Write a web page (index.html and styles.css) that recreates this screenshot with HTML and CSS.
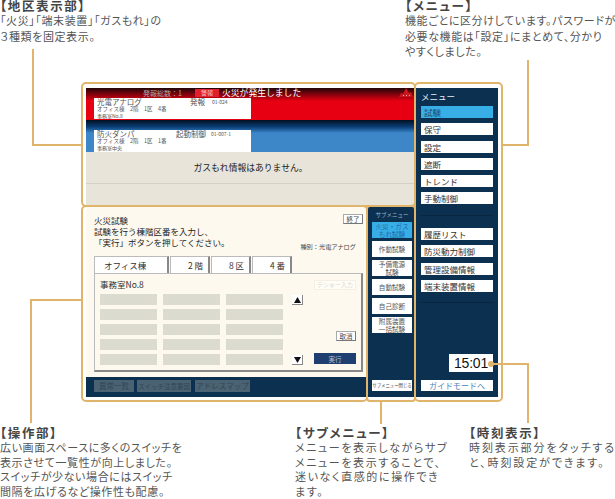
FILE: index.html
```html
<!DOCTYPE html>
<html lang="ja">
<head>
<meta charset="utf-8">
<title>操作画面</title>
<link rel="stylesheet" href="styles.css">
</head>
<body>
<div class="page">

  <div class="screen">

    <div class="area">
      <div class="alarm alarm-fire">
        <div class="alarm-head">
          <span class="count">発報総数：1</span>
          <span class="badge">警報</span>
          <span class="alarm-title">火災が発生しました</span>
          <svg class="fire-icon" width="14" height="9" viewBox="0 0 14 9"><path d="M0 9 L2 5 L4 6 L7 0 L10 5 L12 4 L14 9 Z" fill="#c9151d"/><path d="M4 7h1v1H4zM7 7h1v1H7zM10 7h1v1h-1z" fill="#f3b0b0"/></svg>
        </div>
        <div class="card card-red">
          <div class="card-top"><span class="card-name">光電アナログ</span><span class="card-state state-a">発報</span><span class="card-code">01-024</span></div>
          <div class="card-place">オフィス棟　2階　1区　4番</div>
          <div class="card-room">事務室No.8</div>
        </div>
      </div>
      <div class="alarm alarm-equip">
        <div class="card">
          <div class="card-top"><span class="card-name">防火ダンパ</span><span class="card-state state-b">起動制御</span><span class="card-code">01-007-1</span></div>
          <div class="card-place">オフィス棟　2階　1区　1番</div>
          <div class="card-room">事務室中央</div>
        </div>
      </div>
      <div class="gas">
        <div class="gas-msg">ガスもれ情報はありません。</div>
        <div class="gas-empty"></div>
      </div>
    </div>

    <div class="work">
      <div class="work-body">
        <div class="guide">
          <div class="guide-text">火災試験<br>試験を行う棟階区番を入力し、<br>「実行」ボタンを押してください。</div>
          <div class="guide-side">
            <span class="btn btn-end">終了</span>
            <span class="kind">種別：光電アナログ</span>
          </div>
        </div>
        <div class="tabs">
          <span class="tab tab-b">オフィス棟</span>
          <span class="tab tab-f">2 階</span>
          <span class="tab tab-f">8 区</span>
          <span class="tab tab-f">4 番</span>
        </div>
        <div class="panel">
          <div class="panel-left">
            <div class="room">事務室No.8</div>
            <div class="slots">
              <i></i><i></i><i></i><i></i><i></i>
              <i></i><i></i><i></i><i></i><i></i>
              <i></i><i></i><i></i><i></i><i></i>
            </div>
          </div>
          <div class="arrows">
            <span class="arrow"><svg width="7" height="6" viewBox="0 0 7 6"><path d="M3.5 0L7 6H0Z" fill="#111"/></svg></span>
            <span class="arrow"><svg width="7" height="6" viewBox="0 0 7 6"><path d="M0 0H7L3.5 6Z" fill="#111"/></svg></span>
          </div>
          <div class="panel-right">
            <span class="tenkey">テンキー入力</span>
            <span class="btn btn-cancel">取消</span>
            <span class="btn btn-run">実行</span>
          </div>
        </div>
      </div>
      <div class="work-foot">
        <span class="off off-1">異常一覧</span>
        <span class="off off-2">スイッチ注意要因</span>
        <span class="off off-3">アドレスマップ</span>
      </div>
    </div>

    <div class="sub">
      <div class="sub-title">サブメニュー</div>
      <div class="sub-item sub-active">火災・ガス<br>もれ試験</div>
      <div class="sub-item">作動試験</div>
      <div class="sub-item">予備電源<br>試験</div>
      <div class="sub-item">自動試験</div>
      <div class="sub-item">自己診断</div>
      <div class="sub-item">附属装置<br>一括試験</div>
      <div class="sub-close">サブメニュー閉じる</div>
    </div>

    <div class="menu">
      <div class="menu-title">メニュー</div>
      <div class="menu-group">
        <div class="menu-item menu-active">試験</div>
        <div class="menu-item">保守</div>
        <div class="menu-item">設定</div>
        <div class="menu-item">遮断</div>
        <div class="menu-item">トレンド</div>
        <div class="menu-item">手動制御</div>
      </div>
      <div class="menu-group menu-group-2">
        <div class="menu-item">履歴リスト</div>
        <div class="menu-item">防災動力制御</div>
        <div class="menu-item">管理設備情報</div>
        <div class="menu-item">端末装置情報</div>
      </div>
      <div class="clock">15:01</div>
      <div class="guide-btn">ガイドモードへ</div>
    </div>

  </div>

  <svg class="lines" width="615" height="499" viewBox="0 0 615 499">
    <g fill="none" stroke="#e0b46a" stroke-width="2">
      <rect x="82" y="83" width="333" height="123" rx="4"/>
      <rect x="82" y="206" width="285" height="195" rx="4"/>
      <rect x="367" y="206" width="48" height="195" rx="3"/>
      <rect x="415" y="83" width="87" height="318" rx="4"/>
      <path d="M33 49V145H82M31 423V300H82M528 60V145H502M381 402V424M528 423V364H491"/>
    </g>
    <circle cx="491" cy="364" r="3" fill="#e0b46a"/>
  </svg>

  <div class="note note-area">
    <h2>【地区表示部】</h2>
    <p>「火災」「端末装置」「ガスもれ」の<br>３種類を固定表示。</p>
  </div>
  <div class="note note-menu">
    <h2>【メニュー】</h2>
    <p>機能ごとに区分けしています。パスワードが<br>必要な機能は「設定」にまとめて、分かり<br>やすくしました。</p>
  </div>
  <div class="note note-work">
    <h2>【操作部】</h2>
    <p>広い画面スペースに多くのスイッチを<br>表示させて一覧性が向上しました。<br>スイッチが少ない場合にはスイッチ<br>間隔を広げるなど操作性も配慮。</p>
  </div>
  <div class="note note-sub">
    <h2>【サブメニュー】</h2>
    <p>メニューを表示しながらサブ<br>メニューを表示することで、<br>迷いなく直感的に操作でき<br>ます。</p>
  </div>
  <div class="note note-time">
    <h2>【時刻表示】</h2>
    <p>時刻表示部分をタッチする<br>と、時刻設定ができます。</p>
  </div>

</div>
</body>
</html>
```

FILE: styles.css
```css
* {
    box-sizing: border-box;
}

body {
    margin: 0;
    background-color: white;
    font-family: "Noto Sans CJK JP", "Noto Sans", sans-serif;
    color: #222;
}

.page {
    position: relative;
    width: 615px;
    height: 499px;
    padding: 88px 0 0 86px;
    overflow: hidden;
}

.screen {
    display: grid;
    grid-template-columns: 281px 48px 83px;
    grid-template-rows: 118px 191px;
    width: 412px;
    height: 309px;
}

/* top area */
.area {
    grid-column: 1 / 3;
    grid-row: 1;
    display: flex;
    flex-direction: column;
}

.alarm {
    height: 32px;
    padding-left: 8px;
    display: flex;
    flex-direction: column;
    justify-content: flex-end;
    position: relative;
}

.alarm-fire {
    background: linear-gradient(#200508, #e60012 13px);
}

.alarm-equip {
    background: linear-gradient(#02101f, #0a3f78 7px, #3d86c8 13px);
}

.alarm-head {
    position: absolute;
    top: 0;
    left: 57px;
    right: 0;
    height: 10px;
    display: flex;
    align-items: center;
    line-height: 10px;
}

.count {
    width: 52px;
    font-size: 7px;
    color: #b0a8a8;
}

.badge {
    width: 24px;
    height: 8px;
    line-height: 8px;
    background-color: #e0202c;
    color: #f2c8c8;
    font-size: 6px;
    text-align: center;
}

.alarm-title {
    margin-left: 3px;
    font-size: 8.8px;
    color: white;
}

.fire-icon {
    position: absolute;
    top: 0;
    right: 2px;
}

.card {
    width: 157px;
    height: 22px;
    background-color: white;
    padding-left: 3px;
    color: #555;
}

.card-red {
    height: 21px;
    margin-bottom: 1px;
}

.card-top {
    display: flex;
    align-items: center;
    height: 8px;
    font-size: 7.5px;
    line-height: 8px;
}

.card-name {
    width: 79px;
}

.state-a {
    width: 22px;
    margin-left: 14px;
}

.state-b {
    width: 35px;
}

.card-code {
    font-size: 5px;
}

.card-place {
    height: 7px;
    font-size: 5.5px;
    line-height: 7px;
}

.card-room {
    height: 6px;
    font-size: 5px;
    line-height: 6px;
}

.gas {
    flex: 1;
    background-color: #e8e4da;
}

.gas-msg {
    height: 32px;
    border-bottom: 1px solid #d4d0c6;
    text-align: center;
    font-size: 8.8px;
    line-height: 32px;
}

/* work area */
.work {
    grid-column: 1;
    grid-row: 2;
    display: flex;
    flex-direction: column;
}

.work-body {
    height: 171px;
    background-color: #fdf9ee;
    padding: 8px 4px 0 8px;
}

.guide {
    display: flex;
    justify-content: space-between;
    height: 42px;
}

.guide-text {
    font-size: 8.5px;
    line-height: 11px;
    padding-top: 1px;
}

.guide-side {
    display: flex;
    flex-direction: column;
    align-items: flex-end;
    justify-content: space-between;
    padding-bottom: 5px;
}

.kind {
    font-size: 6.2px;
    line-height: 8px;
    color: #444;
    margin-right: 7px;
}

.btn {
    display: block;
    text-align: center;
    font-size: 6.5px;
    background-color: white;
    border: 1px solid #aaa;
    border-right-color: #777;
    border-bottom-color: #777;
    color: #444;
}

.btn-end {
    width: 20px;
    height: 10px;
    line-height: 8px;
}

.tabs {
    display: flex;
    gap: 1px;
    height: 17px;
}

.tab {
    background-color: white;
    border: 1px solid #bbb;
    border-right: 2px solid #888;
    border-bottom: none;
    font-size: 8.5px;
    line-height: 16px;
    text-align: right;
    padding-right: 5px;
    color: #333;
}

.tab-b {
    width: 75px;
    text-align: left;
    padding-left: 9px;
}

.tab-f {
    width: 40px;
}

.panel {
    display: flex;
    width: 269px;
    height: 99px;
    border: 1px solid #bbb;
    border-right: 2px solid #888;
    border-bottom: 2px solid #888;
    background-color: #fdf9ee;
    padding: 5px 5px 0 5px;
}

.panel-left {
    width: 183px;
}

.room {
    font-size: 8.5px;
    line-height: 10px;
    height: 15px;
    color: #333;
}

.slots {
    display: grid;
    grid-template-rows: repeat(5, 11px);
    grid-auto-flow: column;
    grid-auto-columns: 57px;
    column-gap: 6px;
    row-gap: 4px;
}

.slots i {
    background-color: #dcdbd0;
}

.arrows {
    display: flex;
    flex-direction: column;
    justify-content: space-between;
    width: 11px;
    height: 70px;
    margin: 16px 0 0 9px;
}

.arrow {
    display: flex;
    align-items: center;
    justify-content: center;
    width: 11px;
    height: 10px;
    background-color: white;
    border-right: 1px solid #888;
    border-bottom: 1px solid #888;
}

.panel-right {
    flex: 1;
    display: flex;
    flex-direction: column;
    align-items: flex-end;
}

.tenkey {
    width: 42px;
    height: 10px;
    margin-top: 1px;
    border: 1px solid #f4f0e6;
    background-color: #fffdf6;
    color: #ddd9cc;
    font-size: 6px;
    line-height: 8px;
    text-align: center;
}

.btn-cancel {
    width: 20px;
    height: 10px;
    line-height: 8px;
    margin-top: 41px;
}

.btn-run {
    width: 42px;
    height: 11px;
    line-height: 10px;
    margin-top: 12px;
    background-color: #1e3f6f;
    border-color: #1e3f6f;
    color: #bcc6d6;
}

.work-foot {
    flex: 1;
    background-color: #0b3050;
    display: flex;
    align-items: flex-start;
    padding: 3px 0 0 8px;
}

.off {
    height: 12px;
    background-color: #4b6272;
    color: #2f4757;
    font-size: 7.5px;
    line-height: 12px;
    text-align: center;
    white-space: nowrap;
}

.off-1 { width: 40px; }
.off-2 { width: 54px; margin-left: 3px; font-size: 6.5px; }
.off-3 { width: 55px; margin-left: 4px; }

/* sub menu */
.sub {
    grid-column: 2;
    grid-row: 2;
    position: relative;
    background-color: #0b3050;
    padding: 6px 3px 0 5px;
    display: flex;
    flex-direction: column;
    gap: 3px;
}

.sub-title {
    height: 7px;
    margin-bottom: 0;
    font-size: 5.5px;
    line-height: 7px;
    color: #a9b6c2;
    text-align: center;
}

.sub-item {
    width: 40px;
    height: 16px;
    background-color: white;
    color: #555;
    font-size: 6.6px;
    line-height: 8px;
    text-align: center;
    display: flex;
    align-items: center;
    justify-content: center;
}

.sub-active {
    background-color: #38aee6;
    color: #1d6aa8;
}

.sub-close {
    width: 40px;
    height: 11px;
    margin-top: auto;
    margin-bottom: 6px;
    background-color: white;
    color: #444;
    font-size: 4.4px;
    line-height: 11px;
    text-align: center;
    white-space: nowrap;
}

/* main menu */
.menu {
    grid-column: 3;
    grid-row: 1 / 3;
    background-color: #0b3050;
    padding: 0 5px 0 6px;
    display: flex;
    flex-direction: column;
}

.menu-title {
    height: 18px;
    font-size: 8.5px;
    line-height: 16px;
    color: #e8eef2;
}

.menu-group {
    display: flex;
    flex-direction: column;
    gap: 5.3px;
    height: 110px;
    border-bottom: 1px solid #08263f;
}

.menu-group-2 {
    height: 87px;
    padding-top: 12px;
}

.menu-item {
    height: 12px;
    flex-shrink: 0;
    background-color: white;
    color: #333;
    font-size: 8.5px;
    line-height: 12px;
    padding-left: 3px;
    white-space: nowrap;
}

.menu-active {
    background-color: #38aee6;
    color: #1b4a70;
}

.clock {
    width: 44px;
    height: 18px;
    margin: 51px 0 0 auto;
    background-color: white;
    color: #111;
    font-family: "Liberation Sans", sans-serif;
    font-size: 14px;
    line-height: 18px;
    text-align: center;
    letter-spacing: -0.2px;
}

.guide-btn {
    height: 11px;
    margin-top: 8px;
    background-color: white;
    color: #4a7fb8;
    font-size: 8px;
    line-height: 11px;
    text-align: center;
    white-space: nowrap;
}

/* callouts round the screen */
.lines {
    position: absolute;
    top: 0;
    left: 0;
}

.note {
    position: absolute;
    color: #555;
    font-feature-settings: "palt";
}

.note h2 {
    margin: 0;
    font-size: 12.5px;
    line-height: 15px;
    font-weight: 700;
    color: #444;
    letter-spacing: 1.6px;
}

.note p {
    margin: 0;
    font-size: 11px;
    line-height: 15.7px;
    letter-spacing: 0.6px;
    white-space: nowrap;
}

.note-area { left: 0; top: -2px; }
.note-menu { left: 405px; top: -2px; }
.note-work { left: 0; top: 425px; }
.note-sub { left: 295px; top: 425px; }
.note-time { left: 469px; top: 425px; }

.note-work p,
.note-sub p,
.note-time p { line-height: 14.6px; }

.note-sub p { letter-spacing: 1.6px; }
.note-time p { letter-spacing: 1.9px; }
```
